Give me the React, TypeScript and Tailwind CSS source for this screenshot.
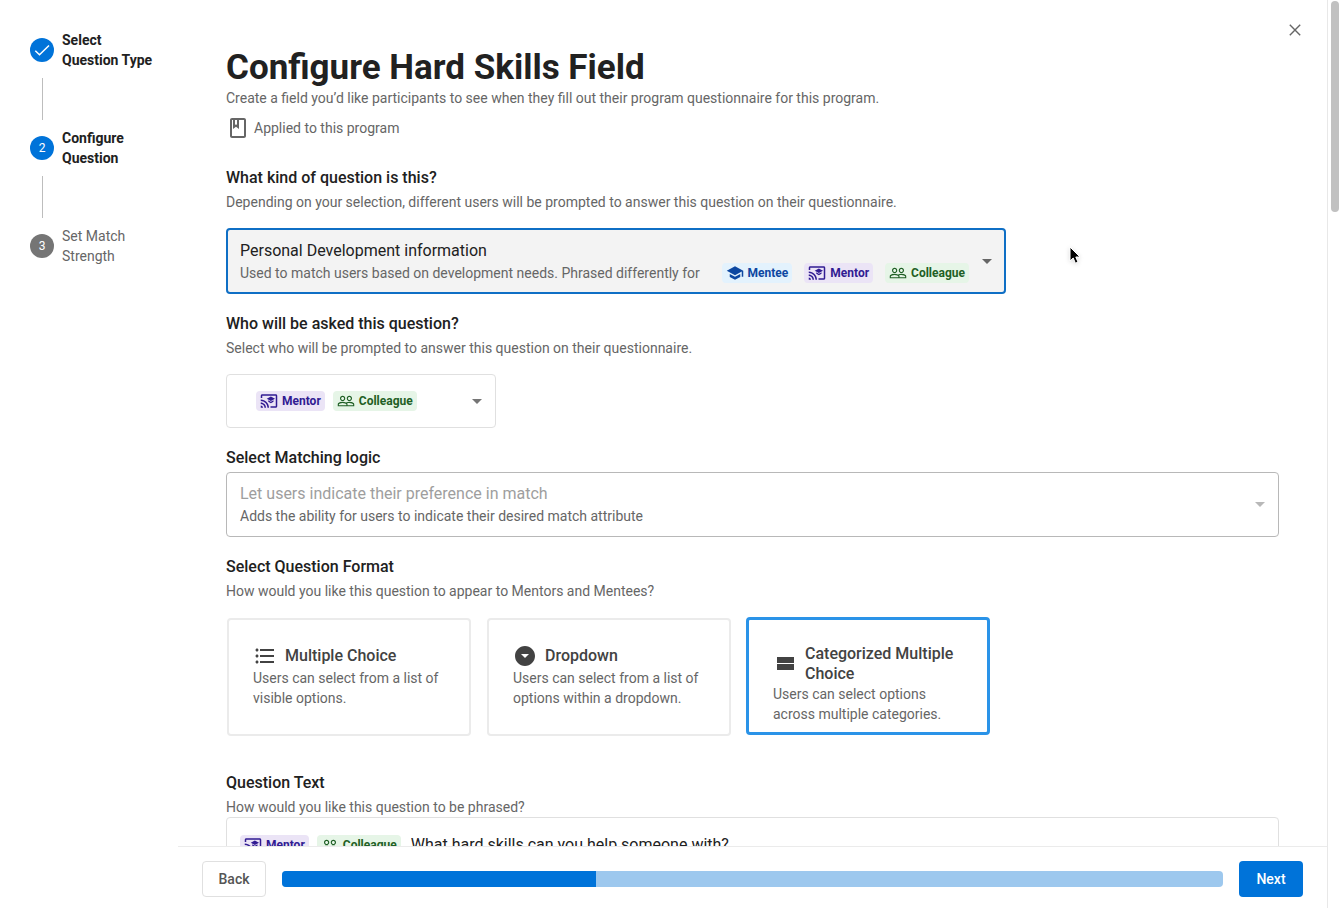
import { useState } from "react";
import type { ReactNode } from "react";
import {
  MdArrowDropDown,
  MdArrowDropDownCircle,
  MdFormatListBulleted,
  MdOutlineCastForEducation,
  MdOutlineClass,
  MdPeopleOutline,
  MdSchool,
} from "react-icons/md";

type Role = "Mentee" | "Mentor" | "Colleague";

const roleStyles: Record<Role, string> = {
  Mentee: "bg-[#e3f2fd] text-[#0d47a1]",
  Mentor: "bg-[#ebe4f6] text-[#311b92]",
  Colleague: "bg-[#e6f5e7] text-[#1f5f25]",
};

const roleIcons: Record<Role, ReactNode> = {
  Mentee: <MdSchool size={18} />,
  Mentor: <MdOutlineCastForEducation size={18} />,
  Colleague: <MdPeopleOutline size={18} />,
};

function RoleChip({ role }: { role: Role }) {
  return (
    <span
      className={`inline-flex h-5 items-center gap-1 rounded px-1 text-xs font-bold ${roleStyles[role]}`}
    >
      {roleIcons[role]}
      {role}
    </span>
  );
}

type StepState = "done" | "current" | "upcoming";

const steps: { lines: [string, string]; state: StepState }[] = [
  { lines: ["Select", "Question Type"], state: "done" },
  { lines: ["Configure", "Question"], state: "current" },
  { lines: ["Set Match", "Strength"], state: "upcoming" },
];

function Stepper() {
  return (
    <nav aria-label="Progress" className="w-[178px] shrink-0 pt-[30px] pl-[30px]">
      <ol className="flex flex-col gap-2">
        {steps.map((step, i) => (
          <li key={step.lines[0]} className="flex flex-col gap-2">
            {i > 0 && <span className="ml-3 h-[42px] w-px bg-[#bdbdbd]" />}
            <div className="flex items-center gap-2">
              <span
                className={`flex size-6 items-center justify-center rounded-full text-xs text-white ${
                  step.state === "upcoming" ? "bg-[#757575]" : "bg-[#0073d9]"
                }`}
              >
                {step.state === "done" ? (
                  <svg width="24" height="24" viewBox="0 0 24 24" fill="none" stroke="white" strokeWidth="1.5" aria-label="Done">
                    <path d="M5.3 12.7 9.5 16.7 19 7.5" />
                  </svg>
                ) : (
                  i + 1
                )}
              </span>
              <span
                className={`text-sm leading-5 ${
                  step.state === "upcoming" ? "text-[#666666]" : "font-bold text-[#212121]"
                }`}
              >
                {step.lines[0]}
                <br />
                {step.lines[1]}
              </span>
            </div>
          </li>
        ))}
      </ol>
    </nav>
  );
}

function FieldLabel({ htmlFor, children }: { htmlFor: string; children: ReactNode }) {
  return (
    <label htmlFor={htmlFor} className="block text-base leading-6 font-medium text-[#212121]">
      {children}
    </label>
  );
}

function Hint({ children }: { children: ReactNode }) {
  return <p className="text-sm leading-5 text-[#666666]">{children}</p>;
}

/* A native select is laid over the rich preview of its chosen option. */
function RichSelect({
  id,
  options,
  className,
  arrowClass,
  disabled,
  children,
}: {
  id: string;
  options: string[];
  className: string;
  arrowClass: string;
  disabled?: boolean;
  children: ReactNode;
}) {
  return (
    <div className={`relative flex items-center justify-between rounded ${className}`}>
      {children}
      <MdArrowDropDown size={24} className={`shrink-0 ${arrowClass}`} />
      <select id={id} disabled={disabled} className="absolute inset-0 size-full cursor-pointer opacity-0">
        {options.map((o) => (
          <option key={o}>{o}</option>
        ))}
      </select>
    </div>
  );
}

const formats = [
  {
    id: "multiple",
    title: "Multiple Choice",
    text: "Users can select from a list of visible options.",
    icon: <MdFormatListBulleted size={24} />,
  },
  {
    id: "dropdown",
    title: "Dropdown",
    text: "Users can select from a list of options within a dropdown.",
    icon: <MdArrowDropDownCircle size={24} />,
  },
  {
    id: "categorized",
    title: "Categorized Multiple Choice",
    text: "Users can select options across multiple categories.",
    icon: (
      <svg width="24" height="24" viewBox="0 0 24 24" fill="currentColor">
        <path d="M4 18h17v-6H4v6zM4 5v6h17V5H4z" />
      </svg>
    ),
  },
];

function FormatPicker() {
  const [format, setFormat] = useState("categorized");
  return (
    <fieldset className="mt-[18px]">
      <legend className="text-base leading-6 font-medium text-[#212121]">Select Question Format</legend>
      <div className="mt-0.5">
        <Hint>How would you like this question to appear to Mentors and Mentees?</Hint>
      </div>
      <div className="mt-4 flex flex-wrap items-start gap-4 pl-px">
        {formats.map((f) => (
          <label
            key={f.id}
            className={`min-h-[118px] w-[244px] cursor-pointer rounded ${
              format === f.id
                ? "-ml-px border-3 border-[#2a93e8] px-6 pt-6 pb-2"
                : "mt-px border-2 border-[#ebebeb] px-6 pt-6 pb-2"
            }`}
          >
            <input
              type="radio"
              name="format"
              value={f.id}
              checked={format === f.id}
              onChange={() => setFormat(f.id)}
              className="sr-only"
            />
            <span className="flex min-h-6 items-center gap-2 text-base leading-5 font-medium text-[#424242]">
              <span className="shrink-0">{f.icon}</span>
              {f.title}
            </span>
            <span className="block text-sm leading-5 text-[#666666]">{f.text}</span>
          </label>
        ))}
      </div>
    </fieldset>
  );
}

function Pointer() {
  return (
    <svg
      width="14"
      height="20"
      viewBox="0 0 14 20"
      className="pointer-events-none absolute top-[246px] left-[1069px] drop-shadow-sm"
      aria-hidden="true"
    >
      <path
        d="M1 1v14l3.2-3 2.2 5.2 2.6-1.1-2.2-5.1H11z"
        fill="black"
        stroke="white"
        strokeWidth="1"
      />
    </svg>
  );
}

export default function App() {
  const [text, setText] = useState("What hard skills can you help someone with?");
  return (
    <div className="relative flex h-screen overflow-hidden bg-white font-[Roboto,sans-serif] text-[#212121]">
      <Stepper />
      <div className="relative flex min-w-0 flex-1 flex-col">
        <button type="button" aria-label="Close" className="absolute top-[18px] right-5 flex size-6 items-center justify-center">
          <svg width="12" height="12" viewBox="0 0 12 12" stroke="#666666" strokeWidth="1.4">
            <path d="M.8.8l10.4 10.4M11.2.8.8 11.2" />
          </svg>
        </button>
        <main className="min-h-0 flex-1 overflow-y-auto px-12 pt-12 [scrollbar-width:none]">
          <h1 className="text-[35px] leading-10 font-bold">Configure Hard Skills Field</h1>
          <Hint>
            Create a field you’d like participants to see when they fill out their program questionnaire for this
            program.
          </Hint>
          <p className="mt-2 flex items-center gap-1 text-sm leading-6 text-[#666666]">
            <MdOutlineClass size={24} />
            Applied to this program
          </p>

          <section className="mt-[26px]">
            <FieldLabel htmlFor="kind">What kind of question is this?</FieldLabel>
            <div className="mt-0.5 mb-4">
              <Hint>
                Depending on your selection, different users will be prompted to answer this question on their
                questionnaire.
              </Hint>
            </div>
            <RichSelect
              id="kind"
              options={["Personal Development information"]}
              className="h-[66px] max-w-[780px] gap-1.5 border-2 border-[#0f6fc5] bg-[#f3f3f3] pr-[5px] pl-3"
              arrowClass="text-[#666666]"
            >
              <div className="flex-1">
                <p className="text-base leading-6">Personal Development information</p>
                <div className="flex items-center justify-between text-sm leading-5 text-[#666666]">
                  Used to match users based on development needs. Phrased differently for
                  <span className="flex gap-3">
                    <RoleChip role="Mentee" />
                    <RoleChip role="Mentor" />
                    <RoleChip role="Colleague" />
                  </span>
                </div>
              </div>
            </RichSelect>
          </section>

          <section className="mt-[18px]">
            <FieldLabel htmlFor="audience">Who will be asked this question?</FieldLabel>
            <div className="mt-0.5 mb-4">
              <Hint>Select who will be prompted to answer this question on their questionnaire.</Hint>
            </div>
            <RichSelect
              id="audience"
              options={["Mentor, Colleague"]}
              className="h-[54px] max-w-[270px] border border-[#e0e0e0] pr-1.5 pl-[29px]"
              arrowClass="text-[#757575]"
            >
              <div className="flex gap-2">
                <RoleChip role="Mentor" />
                <RoleChip role="Colleague" />
              </div>
            </RichSelect>
          </section>

          <section className="mt-[18px]">
            <FieldLabel htmlFor="logic">Select Matching logic</FieldLabel>
            <RichSelect
              id="logic"
              disabled
              options={["Let users indicate their preference in match"]}
              className="mt-0.5 h-[65px] border border-[#b8b8b8] pr-1.5 pb-0.5 pl-[13px]"
              arrowClass="text-[#b8b8b8]"
            >
              <div>
                <p className="text-base leading-6 text-[#9e9e9e]">Let users indicate their preference in match</p>
                <Hint>Adds the ability for users to indicate their desired match attribute</Hint>
              </div>
            </RichSelect>
          </section>

          <FormatPicker />

          <section className="mt-[35px] pb-12">
            <FieldLabel htmlFor="question">Question Text</FieldLabel>
            <div className="mt-0.5">
              <Hint>How would you like this question to be phrased?</Hint>
            </div>
            <div className="flex h-14 items-center gap-2.5 rounded border border-[#e0e0e0] px-[13px]">
              <span className="flex gap-2">
                <RoleChip role="Mentor" />
                <RoleChip role="Colleague" />
              </span>
              <input
                id="question"
                value={text}
                onChange={(e) => setText(e.target.value)}
                className="min-w-0 flex-1 bg-transparent text-base leading-6 outline-none"
              />
            </div>
          </section>
        </main>
        <footer className="flex items-center gap-4 border-t border-[#ebebeb] px-6 pt-3.5 pb-[11px]">
          <button type="button" className="h-9 w-16 rounded border border-[#e0e0e0] text-sm font-medium text-[#555555]">
            Back
          </button>
          <div
            role="progressbar"
            aria-label="Setup progress"
            aria-valuenow={1}
            aria-valuemax={3}
            className="h-4 flex-1 overflow-hidden rounded bg-[#9dc8ee]"
          >
            <div className="h-full w-1/3 bg-[#0073d9]" />
          </div>
          <button type="button" className="h-9 w-16 rounded bg-[#0073d9] text-sm font-medium text-white">
            Next
          </button>
        </footer>
      </div>
      <div aria-hidden="true" className="w-[13px] shrink-0 border-l border-[#e8e8e8] pt-px pr-px pl-[3px]">
        <div className="h-[211px] rounded-full bg-[#c1c1c1]" />
      </div>
      <Pointer />
    </div>
  );
}
